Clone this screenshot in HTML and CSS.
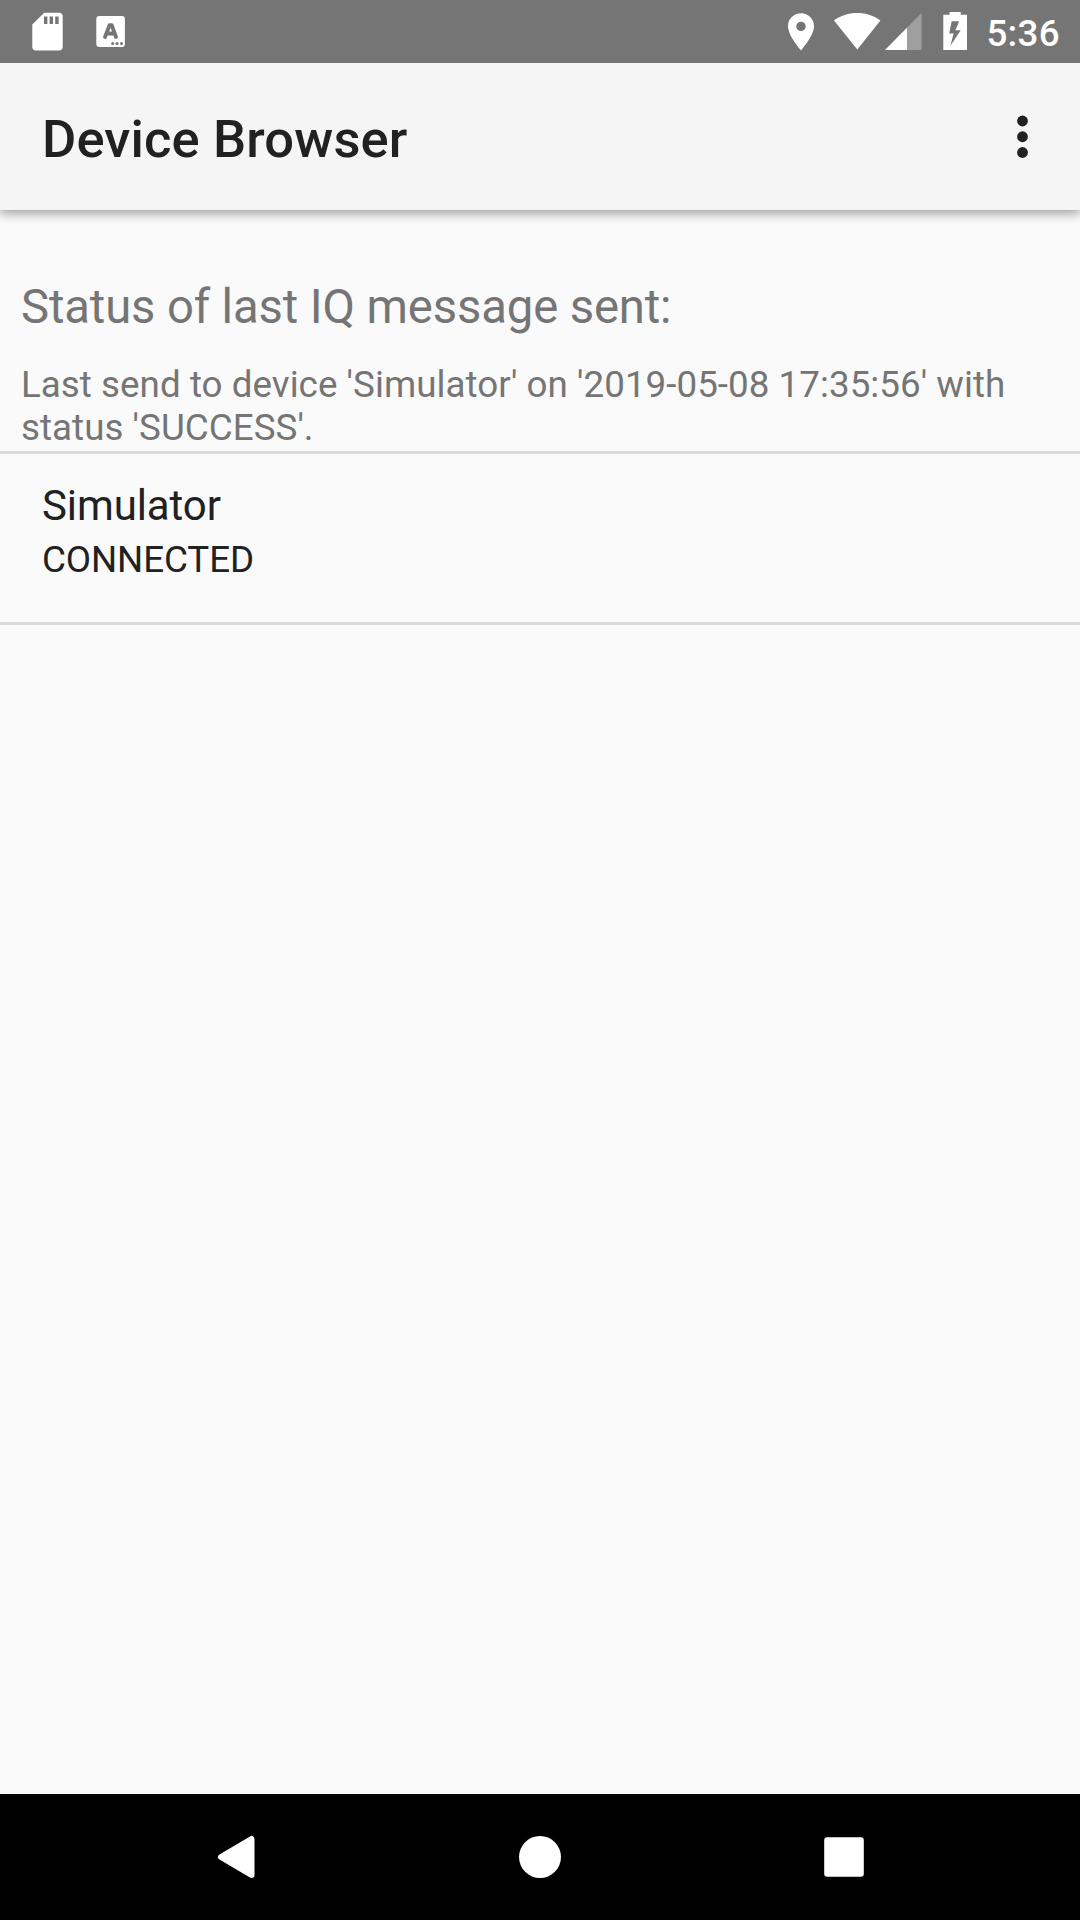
FILE: index.html
```html
<!DOCTYPE html>
<html lang="en">
<head>
<meta charset="utf-8">
<title>Device Browser</title>
<link rel="stylesheet" href="styles.css">
</head>
<body>
<div class="screen">
  <div class="status-bar">
    <div class="notifications">
      <svg class="icon-sd" width="32" height="40" viewBox="0 0 32 40"><path fill="#fff" fill-rule="evenodd" d="M12.2 .7H27Q30.7 .7 30.7 4.4V34.8Q30.7 38.5 27 38.5H4Q.3 38.5 .3 34.8V12.4ZM12 4.5V12H15.4V4.5ZM17.6 4.5V12H21V4.5ZM23.2 4.5V12H26.6V4.5Z"/></svg>
      <svg class="icon-keyboard" width="30" height="32" viewBox="0 0 30 32"><rect x=".3" y="0" width="28.6" height="31" rx="3" fill="#fff"/><path d="M9 21 13.5 9.2H15.7L20 21M11 17.5H18" fill="none" stroke="#757575" stroke-width="3.8" stroke-linecap="round" stroke-linejoin="round"/><g fill="#757575"><circle cx="16.7" cy="27.5" r="1.5"/><circle cx="21" cy="27.5" r="1.5"/><circle cx="25.5" cy="27.5" r="1.5"/></g></svg>
    </div>
    <div class="system">
      <svg class="icon-location" width="28" height="38" viewBox="0 0 28 38"><path fill="#fff" fill-rule="evenodd" d="M13 .3C5.8 .3 0 6 0 13.2 0 23 13 37.3 13 37.3S26 23 26 13.2C26 6 20.2 .3 13 .3ZM13 8.7a4.7 4.7 0 1 1 0 9.4a4.7 4.7 0 1 1 0-9.4Z"/></svg>
      <svg class="icon-wifi" width="48" height="38" viewBox="0 0 48 38"><path fill="#fff" d="M23.3 36.4 0 7.5C6.5 2.5 14.6 0 23.3 0S39.9 2.5 46.4 7.5Z"/></svg>
      <svg class="icon-signal" width="38" height="38" viewBox="0 0 38 38"><path fill="#9f9f9f" d="M36.5 0V37H0Z"/><path fill="#fff" d="M22 14.7V37H0Z"/></svg>
      <svg class="icon-battery" width="26" height="38" viewBox="0 0 26 38"><path fill="#fff" fill-rule="evenodd" d="M6.6 0H17.7V2.7H24V38H.3V2.7H6.6ZM8.7 9.2 6.2 21.5H10.6L7.4 33.8 17.7 18.3H12.4L16.2 9.2Z"/></svg>
      <span class="clock">5:36</span>
    </div>
  </div>
  <header class="app-bar">
    <h1 class="title">Device Browser</h1>
    <svg class="icon-more" width="12" height="44" viewBox="0 0 12 44" fill="#212121"><circle cx="5.5" cy="6" r="5.4"/><circle cx="5.5" cy="21.75" r="5.4"/><circle cx="5.5" cy="37.5" r="5.4"/></svg>
  </header>
  <main class="content">
    <section class="message-status">
      <h2 class="heading">Status of last IQ message sent:</h2>
      <p class="detail">Last send to device 'Simulator' on '2019-05-08 17:35:56' with status 'SUCCESS'.</p>
    </section>
    <ul class="devices">
      <li class="device">
        <div class="device-name">Simulator</div>
        <div class="device-state">CONNECTED</div>
      </li>
    </ul>
  </main>
  <nav class="nav-bar">
    <svg width="42" height="44" viewBox="0 0 42 44"><path d="M6 22 36.5 4V40Z" fill="#fff" stroke="#fff" stroke-width="6" stroke-linejoin="round"/></svg>
    <svg width="42" height="44" viewBox="0 0 42 44"><circle cx="21" cy="22" r="21" fill="#fff"/></svg>
    <svg width="42" height="44" viewBox="0 0 42 44"><rect x="1.2" y="2.2" width="39.6" height="39.6" rx="3" fill="#fff"/></svg>
  </nav>
</div>
</body>
</html>
```
FILE: styles.css
```css
* {
  box-sizing: border-box;
  margin: 0;
  padding: 0;
}

body {
  font-family: Roboto, sans-serif;
  background: #fafafa;
  color: #212121;
}

svg {
  display: block;
  flex: none;
}

.screen {
  display: flex;
  flex-direction: column;
  width: 1080px;
  height: 1920px;
}

.status-bar {
  position: relative;
  z-index: 2;
  display: flex;
  justify-content: space-between;
  height: 63px;
  background: #757575;
}

.notifications {
  display: flex;
  gap: 32px;
  padding-left: 32px;
}

.icon-sd {
  margin-top: 12px;
}

.icon-keyboard {
  margin-top: 16px;
}

.system {
  display: flex;
  padding: 0 20px 0 0;
}

.icon-location {
  margin: 13px 18px 0 0;
}

.icon-wifi {
  margin: 13px 3px 0 0;
}

.icon-signal {
  margin: 13px 20px 0 0;
}

.icon-battery {
  margin: 12px 17px 0 0;
}

.clock {
  padding-top: 2px;
  color: #fff;
  font-size: 36.75px;
  font-weight: 500;
  letter-spacing: 0.3px;
  line-height: 63px;
}

.app-bar {
  position: relative;
  display: flex;
  justify-content: space-between;
  height: 147px;
  padding: 0 51px 0 42px;
  background: #f5f5f5;
  box-shadow: 0 4px 10px rgba(0, 0, 0, 0.35);
}

.title {
  padding-top: 3px;
  font-size: 52.5px;
  font-weight: 500;
  letter-spacing: 0.14px;
  line-height: 147px;
}

.icon-more {
  margin-top: 52px;
}

.content {
  flex: 1;
  padding-top: 69px;
}

.message-status {
  padding: 0 21px 2px;
  color: #757575;
}

.heading {
  margin-bottom: 28px;
  font-size: 47.25px;
  font-weight: 400;
  letter-spacing: -0.13px;
  line-height: 56px;
}

.detail {
  font-size: 36.75px;
  letter-spacing: 0.04px;
  line-height: 43px;
}

.devices {
  list-style: none;
  border-top: 3px solid #dadada;
}

.device {
  height: 171px;
  padding: 27px 42px 0;
  border-bottom: 3px solid #dadada;
}

.device-name {
  margin-bottom: 7px;
  font-size: 42px;
  letter-spacing: -0.1px;
  line-height: 50px;
}

.device-state {
  font-size: 36.75px;
  letter-spacing: -0.1px;
  line-height: 43px;
}

.nav-bar {
  display: flex;
  justify-content: space-between;
  align-items: center;
  height: 126px;
  padding: 0 215px;
  background: #000;
}
```
